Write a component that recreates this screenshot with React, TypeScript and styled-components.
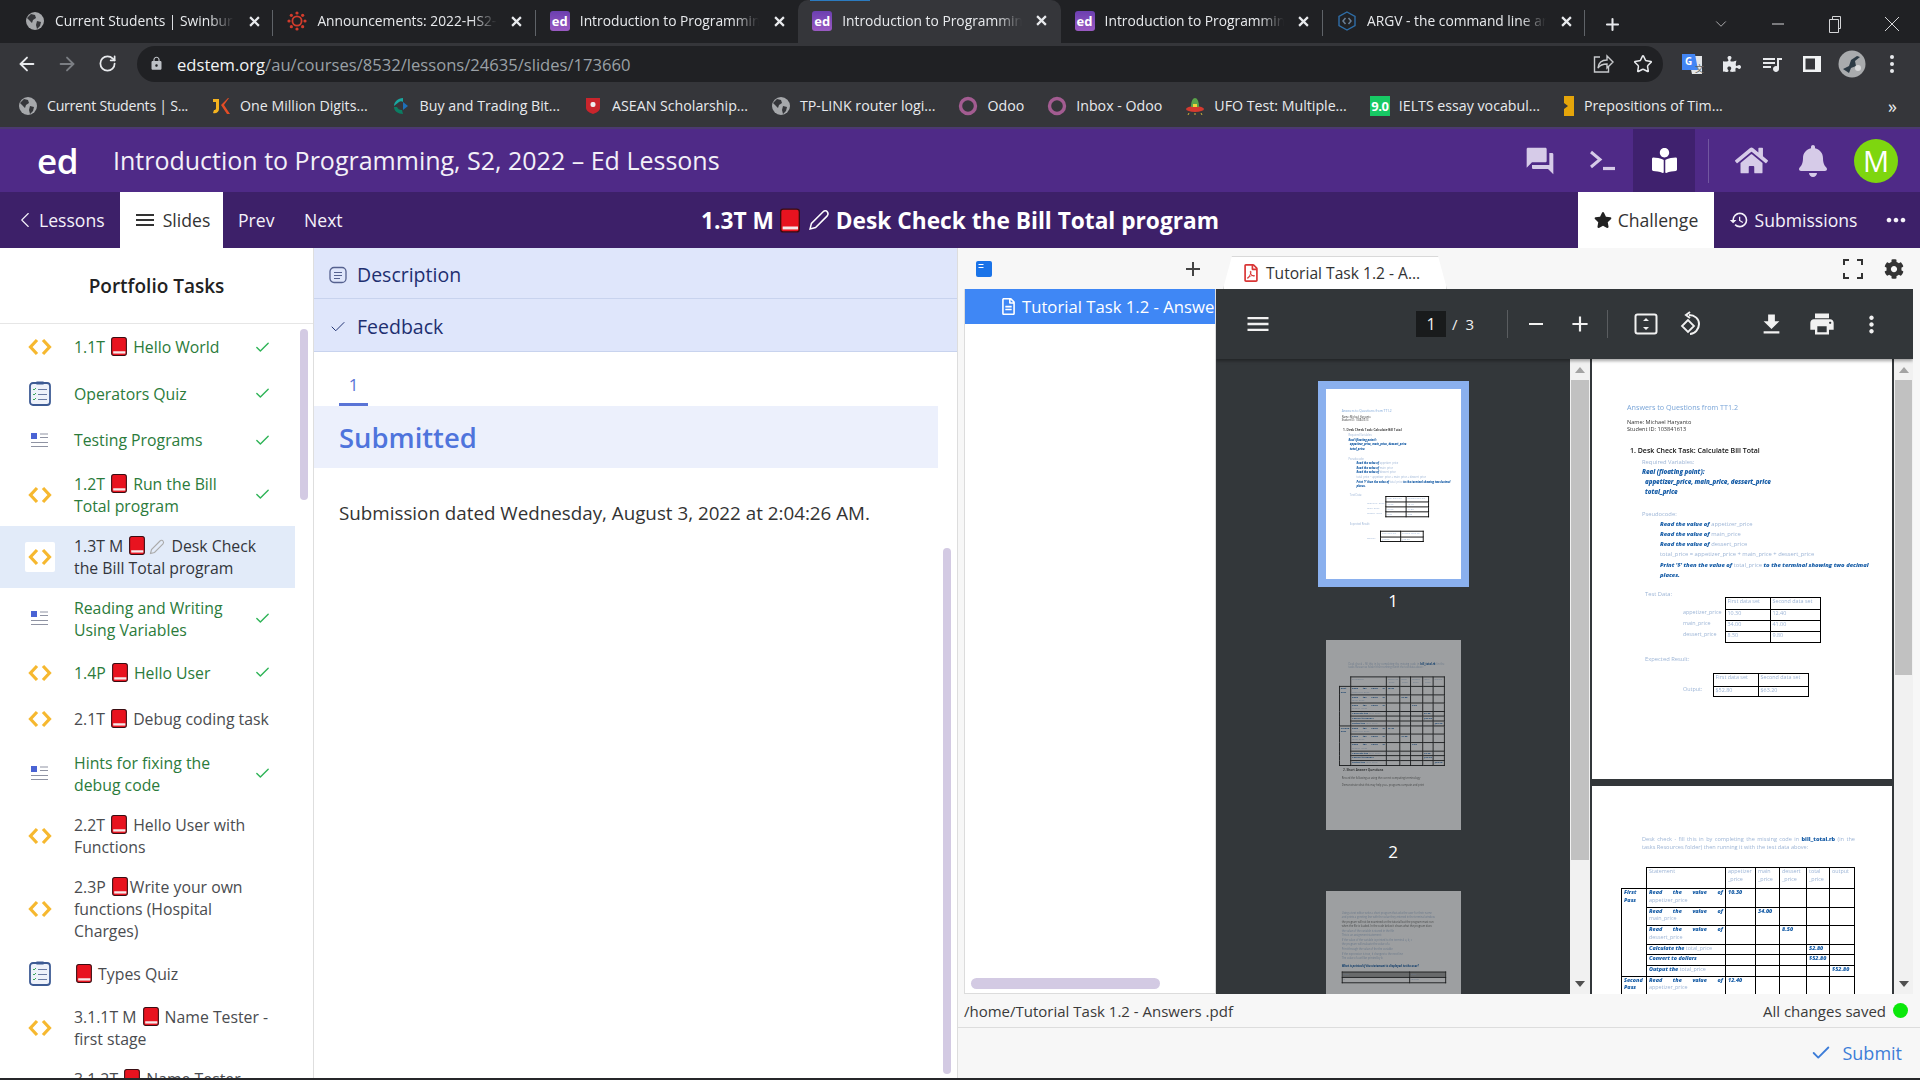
import React from "react";
import styled, { createGlobalStyle } from "styled-components";
import { ArrowLeft, ArrowRight, RotateCw, Star, Check, ChevronLeft, ChevronDown, Plus } from "lucide-react";
import { FaBookReader, FaBell, FaHome, FaStar, FaPuzzlePiece, FaCog, FaRegFilePdf, FaRegFileAlt } from "react-icons/fa";
import { MdQuestionAnswer, MdQueueMusic, MdHistory, MdMoreHoriz, MdMenu, MdRemove, MdAdd, MdFileDownload, MdPrint, MdMoreVert, MdLock } from "react-icons/md";

const Global = createGlobalStyle`
  html, body { margin: 0; padding: 0; height: 100%; overflow: hidden; background: #fff; }
  body { font-family: "Open Sans", "Noto Sans", sans-serif; }
  #root { height: 100%; }
  * { box-sizing: border-box; }
`;

/* === page frame === */
const Page = styled.div`
  width: 1920px;
  height: 1080px;
  display: flex;
  flex-direction: column;
  overflow: hidden;
`;

/* === browser tabs === */
const TabStrip = styled.div`
  height: 43px;
  flex: none;
  background: #202124;
  display: flex;
  align-items: flex-end;
  padding-left: 11px;
  color: #e8eaed;
`;

const Tab = styled.div<{ $active?: boolean; $sep?: boolean }>`
  position: relative;
  width: 262.4px;
  height: ${({ $active }) => ($active ? 43 : 42)}px;
  flex: none;
  display: flex;
  align-items: center;
  gap: 10px;
  padding: 0 9px 2px 14px;
  background: ${({ $active }) => ($active ? "#35363a" : "transparent")};
  border-radius: 10px 10px 0 0;
  &::after {
    content: "";
    display: ${({ $sep }) => ($sep ? "block" : "none")};
    position: absolute;
    right: 0;
    top: 9px;
    height: 26px;
    width: 1px;
    background: #5f6368;
  }
`;

const TabLoad = styled.div`
  position: absolute;
  left: 12px;
  top: 0;
  width: 60px;
  height: 1px;
  background: #2b7bc0;
`;

const TabTitle = styled.div`
  flex: 1;
  min-width: 0;
  white-space: nowrap;
  overflow: hidden;
  font-size: 13.8px;
  line-height: 20px;
  -webkit-mask-image: linear-gradient(to right, #000 86%, transparent 100%);
  mask-image: linear-gradient(to right, #000 86%, transparent 100%);
`;

const TabClose = styled.div`
  width: 20px;
  height: 20px;
  flex: none;
  display: flex;
  align-items: center;
  justify-content: center;
`;

const EdFav = styled.div`
  width: 20px;
  height: 20px;
  flex: none;
  border-radius: 3px;
  background: linear-gradient(#6b3fb0, #9a5ac2);
  color: #fff;
  font-size: 13px;
  font-weight: 700;
  line-height: 20px;
  text-align: center;
`;

const NewTab = styled.div`
  width: 26px;
  margin-left: 14px;
  height: 38px;
  display: flex;
  align-items: center;
  justify-content: center;
`;

const WindowButtons = styled.div`
  margin-left: auto;
  display: flex;
  align-items: center;
  height: 38px;
`;

const WinBtn = styled.div`
  width: 57px;
  display: flex;
  justify-content: center;
  align-items: center;
  color: #d5d6d8;
`;

/* === browser toolbar === */
const ToolBar = styled.div`
  height: 41px;
  flex: none;
  background: #35363a;
  display: flex;
  align-items: center;
  padding: 0 8px 0 7px;
  color: #e8eaed;
`;

const NavBtn = styled.div<{ $dim?: boolean }>`
  width: 40px;
  height: 36px;
  flex: none;
  display: flex;
  align-items: center;
  justify-content: center;
  color: ${({ $dim }) => ($dim ? "#7b7e83" : "#e8eaed")};
`;

const AddressBar = styled.div`
  flex: 1;
  margin: 0 9px 0 10px;
  height: 36px;
  border-radius: 18px;
  background: #202124;
  display: flex;
  align-items: center;
  padding-left: 10px;
`;

const LockCell = styled.div`
  width: 30px;
  padding-left: 2px;
  display: flex;
  justify-content: flex-start;
  color: #bdc1c6;
`;

const Url = styled.div`
  font-size: 16.6px;
  line-height: 24px;
  padding-top: 2px;
  color: #9aa0a6;
  flex: 1;
  b {
    font-weight: 400;
    color: #f1f3f4;
  }
`;

/* === bookmarks === */
const Bookmarks = styled.div`
  height: 45px;
  flex: none;
  background: #35363a;
  border-bottom: 2px solid #4b3a70;
  display: flex;
  align-items: center;
  padding-left: 18px;
  gap: 23px;
  color: #e8eaed;
  font-size: 14.2px;
`;

const Bookmark = styled.div<{ $tight?: boolean }>`
  display: flex;
  align-items: center;
  gap: 9px;
  white-space: nowrap;
  letter-spacing: ${({ $tight }) => ($tight ? "-0.28px" : "0")};
`;

const MoreMarks = styled.div`
  margin-left: auto;
  margin-right: 23px;
  font-size: 18px;
  line-height: 20px;
`;

const IeltsBadge = styled.div`
  width: 20px;
  height: 20px;
  background: #17c964;
  color: #fff;
  font-size: 13px;
  font-weight: 700;
  line-height: 20px;
  text-align: center;
  letter-spacing: -0.5px;
`;

/* === ed header === */
const EdHeader = styled.div`
  height: 63px;
  flex: none;
  background: #4f2a87;
  display: flex;
  align-items: center;
  color: #f3f0f8;
`;

const EdLogo = styled.div`
  width: 113px;
  padding-left: 37px;
  font-size: 35px;
  font-weight: 600;
  line-height: 50px;
  color: #fff;
  letter-spacing: -0.5px;
`;

const EdTitle = styled.div`
  flex: 1;
  padding-bottom: 2px;
  font-size: 25px;
  line-height: 34px;
`;

const HeadCell = styled.div<{ $active?: boolean; $w?: number }>`
  width: ${({ $w }) => $w ?? 62}px;
  height: 63px;
  display: flex;
  align-items: center;
  justify-content: center;
  color: ${({ $active }) => ($active ? "#fff" : "#d6cbe8")};
  background: ${({ $active }) => ($active ? "#3f216e" : "transparent")};
`;

const HeadDivider = styled.div`
  width: 1px;
  height: 44px;
  margin: 0 12px 0 13px;
  background: #7257a0;
`;

const Avatar = styled.div`
  width: 44px;
  height: 44px;
  margin: 0 22px 0 11px;
  border-radius: 50%;
  background: #7ed60f;
  color: #fff;
  font-size: 29px;
  line-height: 44px;
  text-align: center;
`;

/* === ed sub bar === */
const SubBar = styled.div`
  height: 56px;
  flex: none;
  background: #3d2069;
  display: grid;
  grid-template-columns: 1fr auto 1fr;
  align-items: stretch;
  color: #fff;
  font-size: 17.6px;
`;

const SubLeft = styled.div`
  display: flex;
  align-items: stretch;
`;

const SubRight = styled.div`
  display: flex;
  align-items: stretch;
  justify-content: flex-end;
`;

const SubItem = styled.div<{ $on?: boolean; $w: number; $pad?: number; $gap?: number }>`
  width: ${({ $w }) => $w}px;
  display: flex;
  align-items: center;
  justify-content: ${({ $pad }) => ($pad === undefined ? "center" : "flex-start")};
  padding-left: ${({ $pad }) => $pad ?? 0}px;
  gap: ${({ $gap }) => $gap ?? 6}px;
  background: ${({ $on }) => ($on ? "#fff" : "transparent")};
  color: ${({ $on }) => ($on ? "#333" : "#f5f2fa")};
  white-space: nowrap;
`;

const LessonTitle = styled.div`
  display: flex;
  align-items: center;
  gap: 4px;
  font-size: 22.7px;
  font-weight: 700;
  white-space: nowrap;
`;

/* === main === */
const Main = styled.div`
  flex: 1;
  min-height: 0;
  display: grid;
  grid-template-columns: 314px 643px 1fr;
  grid-template-rows: minmax(0, 1fr);
  background: #fff;
`;

const BottomEdge = styled.div`
  height: 2px;
  flex: none;
  background: #26272a;
`;

const Sidebar = styled.aside`
  position: relative;
  border-right: 1px solid #dedede;
  overflow: hidden;
`;

const SideHead = styled.div`
  height: 76px;
  border-bottom: 1px solid #e6e6e6;
  display: flex;
  align-items: center;
  justify-content: center;
  font-size: 19px;
  font-weight: 600;
  color: #222;
`;

const SideRow = styled.div<{ $on?: boolean; $state: "done" | "todo" | "on" }>`
  width: 295px;
  min-height: 46.5px;
  display: flex;
  align-items: center;
  padding: 9px 0 9px 25px;
  font-size: 15.8px;
  line-height: 22px;
  background: ${({ $on }) => ($on ? "#e2ebf9" : "transparent")};
  color: ${({ $state }) => ($state === "done" ? "#2b7b3b" : $state === "on" ? "#33363c" : "#4a4c50")};
`;

const RowIcon = styled.div<{ $on?: boolean }>`
  width: 30px;
  height: 30px;
  margin: -2px 0;
  flex: none;
  display: flex;
  align-items: center;
  justify-content: center;
  border-radius: 2px;
  background: ${({ $on }) => ($on ? "#fff" : "transparent")};
`;

const RowText = styled.div<{ $check?: boolean }>`
  width: ${({ $check }) => ($check ? 180 : 206)}px;
  margin-left: 19px;
  flex: none;
`;

const RowCheck = styled.div`
  color: #2fb457;
  display: flex;
`;

const InlineIcon = styled.svg`
  display: inline-block;
  vertical-align: -3px;
  margin: 0 2px;
`;

const SideThumb = styled.div`
  position: absolute;
  left: 300px;
  top: 81px;
  width: 8px;
  height: 171px;
  border-radius: 4px;
  background: #d3cae3;
`;

/* === middle column === */
const Middle = styled.section`
  position: relative;
  overflow: hidden;
`;

const Accordion = styled.div<{ $tall?: boolean }>`
  height: ${({ $tall }) => ($tall ? 53 : 51)}px;
  background: #dfe6fb;
  border-bottom: 1px solid #c8d3ee;
  display: flex;
  align-items: center;
  padding: 3px 0 0 15px;
  gap: 10px;
  font-size: 19.5px;
  color: #1e2f70;
`;

const Pager = styled.div`
  height: 54px;
  padding: 0 0 0 25px;
  display: flex;
  align-items: flex-end;
`;

const PagerItem = styled.div`
  width: 29px;
  height: 40px;
  border-bottom: 3px solid #5a74d6;
  color: #5a74d6;
  font-size: 17px;
  line-height: 38px;
  text-align: center;
`;

const Band = styled.div`
  width: 624px;
  height: 62px;
  background: #ecf0fc;
  padding-left: 25px;
  display: flex;
  align-items: center;
  font-size: 27.4px;
  font-weight: 600;
  color: #4f74dc;
`;

const SubmissionText = styled.p`
  margin: 30px 0 0 25px;
  font-size: 18.8px;
  line-height: 30px;
  color: #333;
`;

const MiddleThumb = styled.div`
  position: absolute;
  left: 629px;
  top: 300px;
  bottom: 4px;
  width: 8px;
  border-radius: 4px;
  background: #d3cae3;
`;

/* === right column === */
const Right = styled.section`
  border-left: 1px solid #dddddd;
  background: #f7f7f7;
  display: flex;
  flex-direction: column;
  min-width: 0;
  min-height: 0;
`;

const WorkTop = styled.div`
  height: 41px;
  flex: none;
  display: flex;
  padding-left: 6px;
`;

const TreeTop = styled.div`
  width: 250px;
  flex: none;
  display: flex;
  align-items: center;
  justify-content: space-between;
  padding: 0 9px 0 11px;
  color: #444;
`;

const FileTab = styled.div`
  align-self: flex-end;
  width: 224px;
  height: 33px;
  margin-left: 9px;
  flex: none;
  background: #fff;
  border: 1px solid #d9d9d9;
  border-bottom: none;
  clip-path: polygon(4% 0, 96% 0, 100% 100%, 0 100%);
  border-radius: 2px 2px 0 0;
  display: flex;
  align-items: center;
  gap: 6px;
  padding-left: 18px;
  color: #333;
  font-size: 15.6px;
  white-space: nowrap;
`;

const TopTools = styled.div`
  margin-left: auto;
  display: flex;
  align-items: center;
  gap: 21px;
  padding-right: 16px;
  color: #333;
`;

const Work = styled.div`
  flex: 1;
  min-height: 0;
  display: flex;
  padding: 0 7px 0 6px;
`;

const Tree = styled.div`
  position: relative;
  width: 252px;
  flex: none;
  background: #fff;
  border: 1px solid #dcdcdc;
  border-top: none;
  overflow: hidden;
`;

const TreeRow = styled.div`
  height: 35px;
  background: #3f87f5;
  color: #fff;
  font-size: 16.7px;
  display: flex;
  align-items: center;
  gap: 5px;
  padding-left: 35px;
  white-space: nowrap;
  svg {
    flex: none;
  }
`;

const TreeThumb = styled.div`
  position: absolute;
  left: 6px;
  bottom: 4px;
  width: 189px;
  height: 11px;
  border-radius: 6px;
  background: #d3cae3;
`;

const Viewer = styled.div`
  flex: 1;
  min-width: 0;
  display: flex;
  flex-direction: column;
  background: #33373a;
  overflow: hidden;
`;

const ViewerBar = styled.div`
  height: 70px;
  flex: none;
  background: #323639;
  box-shadow: 0 2px 3px rgba(0, 0, 0, 0.35);
  position: relative;
  z-index: 1;
  display: flex;
  align-items: center;
  color: #f1f1f1;
`;

const BarBtn = styled.div<{ $at?: number }>`
  width: 40px;
  margin-left: ${({ $at }) => $at ?? 0}px;
  flex: none;
  display: flex;
  align-items: center;
  justify-content: center;
`;

const PageBox = styled.div`
  width: 30px;
  height: 26px;
  margin-left: 138px;
  background: #191b1c;
  text-align: center;
  font-size: 16px;
  line-height: 26px;
  flex: none;
`;

const PageCount = styled.div`
  margin-left: 6px;
  width: 30px;
  font-size: 15px;
  word-spacing: 4px;
  flex: none;
`;

const BarDivider = styled.div<{ $at: number }>`
  width: 1px;
  height: 28px;
  margin-left: ${({ $at }) => $at}px;
  background: #5a5d60;
  flex: none;
`;

const ViewerBody = styled.div`
  flex: 1;
  min-height: 0;
  display: flex;
`;

const ThumbColumn = styled.div`
  width: 354px;
  flex: none;
  padding-top: 22px;
  display: flex;
  flex-direction: column;
  align-items: center;
  overflow: hidden;
`;

const ThumbFrame = styled.div<{ $on?: boolean }>`
  width: 151px;
  height: 206px;
  flex: none;
  padding: 8px;
  background: ${({ $on }) => ($on ? "#8ab0ee" : "transparent")};
`;

const ThumbClip = styled.div<{ $on?: boolean }>`
  width: 135px;
  height: 190px;
  overflow: hidden;
  background: #fff;
  opacity: ${({ $on }) => ($on ? 1 : 0.52)};
`;

const ThumbScale = styled.div`
  width: 300px;
  height: 420px;
  transform: scale(0.45);
  transform-origin: top left;
  --rule: 2.2px;
`;

const ThumbLabel = styled.div`
  height: 45px;
  flex: none;
  color: #fff;
  font-size: 17px;
  line-height: 27px;
`;

const ScrollTrack = styled.div<{ $w: number }>`
  width: ${({ $w }) => $w}px;
  flex: none;
  background: #f1f1f1;
  display: flex;
  flex-direction: column;
  align-items: center;
  overflow: hidden;
`;

const ArrowCell = styled.div<{ $down?: boolean }>`
  height: 21px;
  flex: none;
  display: flex;
  align-items: center;
  justify-content: center;
  &::before {
    content: "";
    border-left: 5px solid transparent;
    border-right: 5px solid transparent;
    ${({ $down }) => ($down ? "border-top: 6px solid #505050;" : "border-bottom: 6px solid #a3a3a3;")}
  }
`;

const ScrollThumb = styled.div<{ $h: number }>`
  width: calc(100% - 2px);
  height: ${({ $h }) => $h}px;
  flex: none;
  background: #c1c1c1;
`;

const ScrollFill = styled.div`
  flex: 1;
`;

const PageColumn = styled.div`
  width: 300px;
  flex: none;
  margin: 0 2px;
  display: flex;
  flex-direction: column;
  gap: 7px;
  overflow: hidden;
`;

/* === pdf pages, drawn at view size, the thumbs scale them === */
const Sheet = styled.div`
  width: 300px;
  height: 420px;
  flex: none;
  background: #fff;
  overflow: hidden;
  padding-top: 43px;
  font-family: "Open Sans", sans-serif;
  font-size: 5.8px;
  line-height: 10.2px;
  color: #9db5d6;
  filter: blur(0.3px);
`;

const Line = styled.div<{ $x?: number; $mt?: number; $kind?: string }>`
  margin-left: ${({ $x }) => $x ?? 35}px;
  margin-top: ${({ $mt }) => $mt ?? 0}px;
  white-space: nowrap;
  ${({ $kind }) =>
    $kind === "title"
      ? "font-size:7.2px;color:#7aa5d8;"
      : $kind === "name"
        ? "color:#333;line-height:7px;font-size:5.6px;"
        : $kind === "head"
          ? "color:#111;font-size:7px;font-weight:600;"
          : $kind === "bold"
            ? "color:#1a5fa8;font-weight:800;font-style:italic;font-size:6.2px;letter-spacing:-0.05px;"
            : $kind === "dark"
              ? "color:#555;"
              : ""}
  b {
    color: #1a5fa8;
    font-style: italic;
    font-weight: 800;
  }
`;

const Justified = styled.div`
  margin: 6px 37px 0 50px;
  text-align: justify;
  line-height: 8px;
  font-size: 5.6px;
  b {
    color: #1a5fa8;
    font-weight: 800;
  }
`;

const DocTable = styled.table<{ $x: number; $mt: number }>`
  margin-left: ${({ $x }) => $x}px;
  margin-top: ${({ $mt }) => $mt}px;
  border-collapse: collapse;
  table-layout: fixed;
  font-size: 5.4px;
  line-height: 7.6px;
  td {
    padding: 0 2px;
    overflow: hidden;
    white-space: nowrap;
    vertical-align: top;
  }
  td.g {
    border: var(--rule, 1px) solid #000;
  }
  td.w {
    white-space: normal;
  }
  b {
    color: #1a5fa8;
    font-style: italic;
    font-weight: 800;
  }
  b.j {
    display: block;
    text-align-last: justify;
  }
`;

const Tr = styled.tr<{ $h: number; $shade?: boolean }>`
  height: ${({ $h }) => $h}px;
  background: ${({ $shade }) => ($shade ? "#999" : "transparent")};
`;

/* === status + submit === */
const StatusBar = styled.div`
  height: 34px;
  flex: none;
  border-bottom: 1px solid #dddddd;
  display: flex;
  align-items: center;
  justify-content: space-between;
  padding: 0 12px 0 6px;
  font-size: 15px;
  color: #3a3a3a;
`;

const Saved = styled.div`
  display: flex;
  align-items: center;
  gap: 7px;
`;

const Dot = styled.div`
  width: 15px;
  height: 15px;
  border-radius: 50%;
  background: #0be80b;
`;

const SubmitBar = styled.div`
  height: 50px;
  flex: none;
  display: flex;
  align-items: center;
  justify-content: flex-end;
  gap: 10px;
  padding-right: 18px;
  color: #3d7dd8;
  font-size: 18px;
`;

/* === small drawings === */
const X = ({ size = 11, w = 2 }: { size?: number; w?: number }) => (
  <svg width={size} height={size} viewBox="0 0 10 10" stroke="#e8eaed" strokeWidth={w} fill="none">
    <path d="M1 1l8 8M9 1l-8 8" />
  </svg>
);

const GlobeFav = () => (
  <svg width="20" height="20" viewBox="0 0 20 20">
    <circle cx="10" cy="10" r="9" fill="#a6a8ab" />
    <path d="M6 3l4 1 1 3-3 2-1 3-3-3-2-2zM12 10l4 1-1 4-3 3-1-4z" fill="#35363a" />
  </svg>
);

const CanvasFav = () => (
  <svg width="20" height="20" viewBox="0 0 20 20">
    <circle cx="10" cy="10" r="4.6" fill="none" stroke="#d13c2c" strokeWidth="1.8" />
    {[0, 45, 90, 135, 180, 225, 270, 315].map((a) => (
      <circle key={a} cx={10 + 8 * Math.cos((a * Math.PI) / 180)} cy={10 + 8 * Math.sin((a * Math.PI) / 180)} r="1.6" fill="#d13c2c" />
    ))}
  </svg>
);

const ArgvFav = () => (
  <svg width="20" height="20" viewBox="0 0 20 20" fill="none">
    <path d="M10 1l8 4.500v9L10 19l-8-4.500v-9z" stroke="#2f6ea8" strokeWidth="1.4" />
    <path d="M8.500 7L6 10l2.500 3M11.500 7L14 10l-2.500 3" stroke="#6a7f95" strokeWidth="1.5" />
  </svg>
);

const OdooRing = () => (
  <svg width="20" height="20" viewBox="0 0 20 20">
    <circle cx="10" cy="10" r="7.5" fill="none" stroke="#a35c91" strokeWidth="3.4" />
  </svg>
);

const Book = ({ w = 16, h = 19 }: { w?: number; h?: number }) => (
  <InlineIcon width={w} height={h} viewBox="0 0 15 18">
    <rect x="0.5" y="0.5" width="14" height="17" rx="2" fill="#e8131f" stroke="#3a0d12" />
    <rect x="2" y="13.5" width="11.5" height="2.2" fill="#f5e9e9" />
  </InlineIcon>
);

const Pen = ({ size = 16, color = "#aaa" }: { size?: number; color?: string }) => (
  <InlineIcon width={size} height={size} viewBox="0 0 16 16" fill="none">
    <path d="M1.5 14.5l1-4L11 2c1-1 2.4-.8 3 0s.8 2 0 3L5.5 13.5z" stroke={color} strokeWidth="1.1" />
  </InlineIcon>
);

const CodeIcon = () => (
  <svg width="24" height="18" viewBox="0 0 24 18" fill="none" stroke="#f6b82f" strokeWidth="3.2">
    <path d="M9 2L2.500 9 9 16M15 2l6.500 7L15 16" />
  </svg>
);

const QuizIcon = () => (
  <svg width="22" height="25" viewBox="0 0 22 25" fill="none">
    <rect x="1" y="2" width="20" height="22" rx="3" fill="#eef2fa" stroke="#3d5b94" strokeWidth="1.8" />
    <rect x="7" y="0.5" width="8" height="3" rx="1" fill="#3d5b94" />
    <path d="M4 8l1 1 2-2M4 13l1 1 2-2M4 18l1 1 2-2" stroke="#3aa95a" strokeWidth="1" />
    <path d="M9 8.500h9M9 13.500h9M9 18.500h9" stroke="#6a7ba3" strokeWidth="1.1" />
  </svg>
);

const SlideIcon = () => (
  <svg width="18" height="17" viewBox="0 0 18 17" fill="none">
    <rect x="0" y="1" width="6" height="6" fill="#4a63d4" />
    <path d="M9 2h8M9 5.500h8M0 10.500h17M0 14.500h17" stroke="#8f93a3" strokeWidth="1" />
  </svg>
);

const Sm = ({ children, w, h }: { children: React.ReactNode; w: number; h?: number }) => (
  <svg width={w} height={h ?? w} viewBox={`0 0 ${w} ${h ?? w}`} fill="none">
    {children}
  </svg>
);

/* === data === */
type Row = { icon: "code" | "quiz" | "slide"; state: "done" | "todo" | "on"; label: React.ReactNode };

const rows: Row[] = [
  { icon: "code", state: "done", label: <>1.1T <Book /> Hello World</> },
  { icon: "quiz", state: "done", label: "Operators Quiz" },
  { icon: "slide", state: "done", label: "Testing Programs" },
  { icon: "code", state: "done", label: <>1.2T <Book /> Run the Bill Total program</> },
  { icon: "code", state: "on", label: <>1.3T M <Book /><Pen /> Desk Check the Bill Total program</> },
  { icon: "slide", state: "done", label: "Reading and Writing Using Variables" },
  { icon: "code", state: "done", label: <>1.4P <Book /> Hello User</> },
  { icon: "code", state: "todo", label: <>2.1T <Book /> Debug coding task</> },
  { icon: "slide", state: "done", label: "Hints for fixing the debug code" },
  { icon: "code", state: "todo", label: <>2.2T <Book /> Hello User with Functions</> },
  { icon: "code", state: "todo", label: <>2.3P <Book />Write your own functions (Hospital Charges)</> },
  { icon: "quiz", state: "todo", label: <><Book /> Types Quiz</> },
  { icon: "code", state: "todo", label: <>3.1.1T M <Book /> Name Tester - first stage</> },
  { icon: "code", state: "todo", label: <>3.1.2T <Book /> Name Tester - second stage</> },
];

const tabs = [
  { fav: <GlobeFav />, title: "Current Students | Swinburne", sep: true },
  { fav: <CanvasFav />, title: "Announcements: 2022-HS2-COS", sep: true },
  { fav: <EdFav>ed</EdFav>, title: "Introduction to Programming", sep: false },
  { fav: <EdFav>ed</EdFav>, title: "Introduction to Programming", active: true },
  { fav: <EdFav>ed</EdFav>, title: "Introduction to Programming", sep: true },
  { fav: <ArgvFav />, title: "ARGV - the command line argu", sep: true },
];

const PageOne = () => (
  <Sheet>
    <Line $kind="title">Answers to Questions from TT1.2</Line>
    <Line $kind="name" $mt={7}>Name: Michael Haryanto</Line>
    <Line $kind="name">Student ID: 103841613</Line>
    <Line $kind="head" $x={38} $mt={12.4}>1. Desk Check Task: Calculate Bill Total</Line>
    <Line $x={50} $mt={0.8}>Required Variables:</Line>
    <Line $kind="bold" $x={50}>Real (floating point):</Line>
    <Line $kind="bold" $x={53}>appetizer_price, main_price, dessert_price</Line>
    <Line $kind="bold" $x={53}>total_price</Line>
    <Line $x={50} $mt={11.2}>Pseudocode:</Line>
    <Line $x={68}><b>Read the value of</b> appetizer_price</Line>
    <Line $x={68}><b>Read the value of</b> main_price</Line>
    <Line $x={68}><b>Read the value of</b> dessert_price</Line>
    <Line $x={68}>total_price = appetizer_price + main_price + dessert_price</Line>
    <Line $x={68}><b>Print '$' then the value of</b> total_price <b>to the terminal showing two decimal</b></Line>
    <Line $x={68}><b>places.</b></Line>
    <Line $x={53} $mt={8.7}>Test Data:</Line>
    <DocTable $x={89} $mt={-2}>
      <colgroup><col width={44} /><col width={45} /><col width={50} /></colgroup>
      <tbody>
        <Tr $h={12}><td /><td className="g">First data set</td><td className="g">Second data set</td></Tr>
        <Tr $h={11}><td>appetizer_price</td><td className="g">10.30</td><td className="g">12.40</td></Tr>
        <Tr $h={11}><td>main_price</td><td className="g">34.00</td><td className="g">41.00</td></Tr>
        <Tr $h={11}><td>dessert_price</td><td className="g">8.50</td><td className="g">9.80</td></Tr>
      </tbody>
    </DocTable>
    <Line $x={53} $mt={11.5}>Expected Result:</Line>
    <DocTable $x={89} $mt={8}>
      <colgroup><col width={32} /><col width={45} /><col width={50} /></colgroup>
      <tbody>
        <Tr $h={13}><td /><td className="g">First data set</td><td className="g">Second data set</td></Tr>
        <Tr $h={10}><td>Output:</td><td className="g">$52.80</td><td className="g">$63.20</td></Tr>
      </tbody>
    </DocTable>
  </Sheet>
);

const readRow = (what: string, v: string, col: number, first?: React.ReactNode) => (
  <Tr $h={18.6}>
    {first}
    <td className="g w"><b className="j">Read the value of</b>{what}</td>
    {[0, 1, 2, 3, 4].map((i) => (
      <td className="g" key={i}>{i === col ? <b>{v}</b> : null}</td>
    ))}
  </Tr>
);

const calcRow = (bold: string, rest: string, v: string, col: number) => (
  <Tr $h={10.7}>
    <td className="g"><b>{bold}</b> {rest}</td>
    {[0, 1, 2, 3, 4].map((i) => (
      <td className="g" key={i}>{i === col ? <b>{v}</b> : null}</td>
    ))}
  </Tr>
);

const PageTwo = () => (
  <Sheet>
    <Justified>
      Desk check - fill this in by completing the missing code in <b>bill_total.rb</b> (in the tasks Resources folder) then running it with the test data above:
    </Justified>
    <DocTable $x={29} $mt={16}>
      <colgroup>
        <col width={25} /><col width={79} /><col width={30} /><col width={24} /><col width={27} /><col width={23} /><col width={25} />
      </colgroup>
      <tbody>
        <Tr $h={21}>
          <td />
          <td className="g">Statement</td>
          <td className="g w">appetizer _price</td>
          <td className="g w">main _price</td>
          <td className="g w">dessert _price</td>
          <td className="g w">total _price</td>
          <td className="g">output</td>
        </Tr>
        {readRow("appetizer_price", "10.30", 0, <td className="g w" rowSpan={6}><b>First Pass</b></td>)}
        {readRow("main_price", "34.00", 1)}
        {readRow("dessert_price", "8.50", 2)}
        {calcRow("Calculate the", "total_price", "52.80", 3)}
        {calcRow("Convert to dollars", "", "$52.80", 3)}
        {calcRow("Output the", "total_price", "$52.80", 4)}
        {readRow("appetizer_price", "12.40", 0, <td className="g w" rowSpan={6}><b>Second Pass</b></td>)}
        {readRow("main_price", "41.00", 1)}
        {readRow("dessert_price", "9.80", 2)}
        {calcRow("Calculate the", "total_price", "63.20", 3)}
        {calcRow("Convert to dollars", "", "$63.20", 3)}
        {calcRow("Output the", "total_price", "$63.20", 4)}
      </tbody>
    </DocTable>
    <Line $kind="head" $x={38} $mt={5}>2. Short Answer Questions</Line>
    <Line $kind="dark" $x={35} $mt={6}>Record the following as using the correct computing terminology</Line>
    <Line $kind="dark" $x={35} $mt={6}>Demonstrate what this may help you - programs compute and print</Line>
  </Sheet>
);

const PageThree = () => (
  <Sheet>
    {[
      "Using a text editor write a short program that asks the user for their name",
      "and prints a greeting line with the value they entered in the terminal window",
      "the program will not be examined on the tutorial but the program must run",
      "when the file is loaded. In the code below it shows what the program does",
      "the value of the variable is stored in the file",
      "This is an assignment statement:",
      "If the value of the variable is printed to the terminal a, b, c",
      "the program will evaluate the value of a",
      "Print through the value of the the variable",
      "If the expression is true, it changes to the next line",
      "The value of a will be printed by b",
    ].map((t, i) => (
      <Line key={i} $x={35} $kind={i === 2 || i === 3 ? "dark" : undefined}>{t}</Line>
    ))}
    <Line $kind="bold" $x={35} $mt={6}>What is printed if the statement is displayed to the user?</Line>
    <DocTable $x={35} $mt={8}>
      <colgroup><col width={150} /><col width={80} /></colgroup>
      <tbody>
        <Tr $h={12} $shade><td className="g">Item</td><td className="g">Type</td></Tr>
        <Tr $h={12}><td className="g">a</td><td className="g">Integer</td></Tr>
      </tbody>
    </DocTable>
  </Sheet>
);

export default function App() {
  return (
    <Page>
      <Global />
      <TabStrip>
        {tabs.map((t, i) => (
          <Tab key={i} $active={t.active} $sep={t.sep}>
            {t.active && <TabLoad />}
            {t.fav}
            <TabTitle>{t.title}</TabTitle>
            <TabClose><X /></TabClose>
          </Tab>
        ))}
        <NewTab><Plus size={19} strokeWidth={2.6} color="#e8eaed" /></NewTab>
        <WindowButtons>
          <WinBtn><ChevronDown size={18} strokeWidth={1} /></WinBtn>
          <WinBtn>
            <Sm w={14}><path d="M1 7h12" stroke="currentColor" /></Sm>
          </WinBtn>
          <WinBtn>
            <Sm w={14} h={18}><path d="M1.500 4.500h9v13h-9zM4.500 4.500v-3h8v12h-2" stroke="currentColor" /></Sm>
          </WinBtn>
          <WinBtn><Sm w={16}><path d="M1 1l14 14M15 1L1 15" stroke="currentColor" /></Sm></WinBtn>
        </WindowButtons>
      </TabStrip>

      <ToolBar>
        <NavBtn><ArrowLeft size={22} strokeWidth={2} /></NavBtn>
        <NavBtn $dim><ArrowRight size={22} strokeWidth={2} /></NavBtn>
        <NavBtn><RotateCw size={19} strokeWidth={2.2} /></NavBtn>
        <AddressBar>
          <LockCell><MdLock size={15} /></LockCell>
          <Url><b>edstem.org</b>/au/courses/8532/lessons/24635/slides/173660</Url>
          <NavBtn>
            <Sm w={22}>
              <path d="M8 4H2.500v15h14v-5" stroke="#c8cacd" strokeWidth="1.4" />
              <path d="M6 15c.5-5 4-8 9-8V3l6 6-6 6v-4c-4 0-7 1-9 4z" stroke="#c8cacd" strokeWidth="1.4" />
            </Sm>
          </NavBtn>
          <NavBtn><Star size={20} strokeWidth={1.8} /></NavBtn>
        </AddressBar>
        <NavBtn>
          <Sm w={24}>
            <path d="M8 4h14v18H12z" fill="#e4e6e8" />
            <path d="M2 2h13l3 16H2z" fill="#4285f4" />
            <text x="5" y="13" fontSize="10" fontWeight="700" fontFamily="Open Sans" fill="#fff">G</text>
            <text x="15" y="20" fontSize="9" fontFamily="Noto Sans CJK SC" fill="#666">文</text>
          </Sm>
        </NavBtn>
        <NavBtn><FaPuzzlePiece size={18} /></NavBtn>
        <NavBtn><MdQueueMusic size={24} /></NavBtn>
        <NavBtn>
          <Sm w={20}><path d="M1 2h18v16H1z" fill="#f1f3f4" /><path d="M3.500 4.500h9.500v11H3.500z" fill="#35363a" /></Sm>
        </NavBtn>
        <NavBtn>
          <Sm w={28}>
            <circle cx="14" cy="14" r="13.500" fill="#a9abad" />
            <path d="M5 19l6-3 2-6 6-4 3 1-5 4 1 5-5 2-2 5z" fill="#2c3a44" />
            <circle cx="20" cy="18" r="3" fill="#d8d9da" />
          </Sm>
        </NavBtn>
        <NavBtn>
          <Sm w={6} h={20}><circle cx="3" cy="3" r="2" fill="#e8eaed" /><circle cx="3" cy="10" r="2" fill="#e8eaed" /><circle cx="3" cy="17" r="2" fill="#e8eaed" /></Sm>
        </NavBtn>
      </ToolBar>

      <Bookmarks>
        <Bookmark $tight><GlobeFav />Current Students | S...</Bookmark>
        <Bookmark>
          <Sm w={20}>
            <path d="M2 3h6v10c0 3-3 5-6 4l1-3c1 .3 2-.5 2-1.500V6H2z" fill="#f5b31f" />
            <path d="M10 9l7-7h1l-5 7 6 9h-3z" fill="#e44d26" />
          </Sm>
          One Million Digits...
        </Bookmark>
        <Bookmark>
          <Sm w={20}>
            <path d="M12 2C7 2 3 6 3 10l5-4c1-1 3-1 4 0z" fill="#1aa7a0" />
            <path d="M3 11c0 4 4 7 9 7l-1-4c-3 0-4-1-5-3z" fill="#0c7d63" />
            <path d="M12 6l5 4-5 4z" fill="#1e6fb8" />
          </Sm>
          Buy and Trading Bit...
        </Bookmark>
        <Bookmark>
          <Sm w={20}>
            <path d="M3 2h14v10c0 3-4 5-7 6-3-1-7-3-7-6z" fill="#c9252c" />
            <rect x="7.500" y="6" width="5" height="5" rx="2" fill="#eee" />
          </Sm>
          ASEAN Scholarship...
        </Bookmark>
        <Bookmark><GlobeFav />TP-LINK router logi...</Bookmark>
        <Bookmark><OdooRing />Odoo</Bookmark>
        <Bookmark><OdooRing />Inbox - Odoo</Bookmark>
        <Bookmark>
          <Sm w={20}>
            <ellipse cx="10" cy="13" rx="9" ry="3" fill="#d43a2f" />
            <path d="M6 11c0-6 2-9 4-9s4 3 4 9z" fill="#5aa34a" />
            <path d="M8 8h4v3H8z" fill="#f1d23a" />
            <path d="M4 17l-1 2M10 17v2M16 17l1 2" stroke="#c9b23a" />
          </Sm>
          UFO Test: Multiple...
        </Bookmark>
        <Bookmark><IeltsBadge>9.0</IeltsBadge>IELTS essay vocabul...</Bookmark>
        <Bookmark>
          <Sm w={12} h={20}><path d="M1 0h10v20H1v-7l4-3-4-3z" fill="#e5a50a" /></Sm>
          Prepositions of Tim...
        </Bookmark>
        <MoreMarks>»</MoreMarks>
      </Bookmarks>

      <EdHeader>
        <EdLogo>ed</EdLogo>
        <EdTitle>Introduction to Programming, S2, 2022 – Ed Lessons</EdTitle>
        <HeadCell><MdQuestionAnswer size={32} /></HeadCell>
        <HeadCell>
          <Sm w={28} h={24}><path d="M3 3l9 7.500-9 7.500" stroke="currentColor" strokeWidth="3" /><path d="M15 19.500h12" stroke="currentColor" strokeWidth="3.2" /></Sm>
        </HeadCell>
        <HeadCell $active><FaBookReader size={25} /></HeadCell>
        <HeadDivider />
        <HeadCell $w={61}><FaHome size={33} /></HeadCell>
        <HeadCell $w={61}><FaBell size={32} /></HeadCell>
        <Avatar>M</Avatar>
      </EdHeader>

      <SubBar>
        <SubLeft>
          <SubItem $w={120} $pad={12} $gap={1}>
            <ChevronLeft size={26} strokeWidth={1} />
            Lessons
          </SubItem>
          <SubItem $w={103} $on>
            <MdMenu size={24} color="#333" />
            Slides
          </SubItem>
          <SubItem $w={81} $pad={15}>Prev</SubItem>
          <SubItem $w={54} $pad={0}>Next</SubItem>
        </SubLeft>
        <LessonTitle>
          1.3T M <Book w={20} h={25} /><Pen size={22} color="#fff" /> Desk Check the Bill Total program
        </LessonTitle>
        <SubRight>
          <SubItem $w={136} $on>
            <FaStar size={18} color="#222" />
            Challenge
          </SubItem>
          <SubItem $w={158}>
            <MdHistory size={20} />
            Submissions
          </SubItem>
          <SubItem $w={48}><MdMoreHoriz size={28} /></SubItem>
        </SubRight>
      </SubBar>

      <Main>
        <Sidebar>
          <SideHead>Portfolio Tasks</SideHead>
          {rows.map((r, i) => (
            <SideRow key={i} $state={r.state} $on={r.state === "on"}>
              <RowIcon $on={r.state === "on"}>
                {r.icon === "code" ? <CodeIcon /> : r.icon === "quiz" ? <QuizIcon /> : <SlideIcon />}
              </RowIcon>
              <RowText $check={r.state === "done"}>{r.label}</RowText>
              {r.state === "done" && (
                <RowCheck><Check size={17} strokeWidth={2} /></RowCheck>
              )}
            </SideRow>
          ))}
          <SideThumb />
        </Sidebar>

        <Middle>
          <Accordion>
            <Sm w={18} h={18}>
              <rect x="1" y="1.500" width="16" height="15" rx="4" stroke="#55618f" strokeWidth="1.3" />
              <path d="M5 6.500h8M5 9.500h8M5 12.500h6" stroke="#55618f" strokeWidth="1.1" />
            </Sm>
            Description
          </Accordion>
          <Accordion $tall>
            <Check size={18} strokeWidth={1.3} color="#1e2f70" />
            Feedback
          </Accordion>
          <Pager><PagerItem>1</PagerItem></Pager>
          <Band>Submitted</Band>
          <SubmissionText>Submission dated Wednesday, August 3, 2022 at 2:04:26 AM.</SubmissionText>
          <MiddleThumb />
        </Middle>

        <Right>
          <WorkTop>
            <TreeTop>
              <Sm w={18} h={18}>
                <rect x="1" y="1" width="16" height="16" rx="2" fill="#1a73e8" />
                <path d="M3.500 4.500h5M3.500 7.500h5" stroke="#fff" strokeWidth="1.2" />
              </Sm>
              <MdAdd size={24} />
            </TreeTop>
            <FileTab>
              <FaRegFilePdf size={18} color="#d93636" />
              Tutorial Task 1.2 - A...
            </FileTab>
            <TopTools>
              <Sm w={20}>
                <path d="M1 6V1h5M14 1h5v5M19 14v5h-5M6 19H1v-5" stroke="#333" strokeWidth="2" />
              </Sm>
              <FaCog size={20} />
            </TopTools>
          </WorkTop>

          <Work>
            <Tree>
              <TreeRow>
                <FaRegFileAlt size={17} />
                Tutorial Task 1.2 - Answers .pdf
              </TreeRow>
              <TreeThumb />
            </Tree>
            <Viewer>
              <ViewerBar>
                <BarBtn $at={22}><MdMenu size={28} /></BarBtn>
                <PageBox>1</PageBox>
                <PageCount>/ 3</PageCount>
                <BarDivider $at={25} />
                <BarBtn $at={8}><MdRemove size={24} /></BarBtn>
                <BarBtn $at={4}><MdAdd size={26} /></BarBtn>
                <BarDivider $at={7} />
                <BarBtn $at={18}>
                  <Sm w={24} h={22}>
                    <rect x="1.500" y="1.500" width="21" height="19" rx="2" stroke="#f1f1f1" strokeWidth="2" />
                    <path d="M12 5l3 3H9zM12 17l3-3H9z" fill="#f1f1f1" />
                  </Sm>
                </BarBtn>
                <BarBtn $at={5}>
                  <Sm w={22} h={26}>
                    <path d="M10 1l-4 3 4 3" stroke="#f1f1f1" strokeWidth="2" />
                    <path d="M9 4c6 0 10 4 10 9s-4 10-9 10" stroke="#f1f1f1" strokeWidth="2" />
                    <path d="M8 9l-6 6 6 6 6-6z" stroke="#f1f1f1" strokeWidth="1.800" />
                  </Sm>
                </BarBtn>
                <BarBtn $at={40}><MdFileDownload size={27} /></BarBtn>
                <BarBtn $at={11}><MdPrint size={28} /></BarBtn>
                <BarBtn $at={9}><MdMoreVert size={27} /></BarBtn>
              </ViewerBar>
              <ViewerBody>
                <ThumbColumn>
                  <ThumbFrame $on>
                    <ThumbClip $on><ThumbScale><PageOne /></ThumbScale></ThumbClip>
                  </ThumbFrame>
                  <ThumbLabel>1</ThumbLabel>
                  <ThumbFrame>
                    <ThumbClip><ThumbScale><PageTwo /></ThumbScale></ThumbClip>
                  </ThumbFrame>
                  <ThumbLabel>2</ThumbLabel>
                  <ThumbFrame>
                    <ThumbClip><ThumbScale><PageThree /></ThumbScale></ThumbClip>
                  </ThumbFrame>
                </ThumbColumn>
                <ScrollTrack $w={20}>
                  <ArrowCell />
                  <ScrollThumb $h={480} />
                  <ScrollFill />
                  <ArrowCell $down />
                </ScrollTrack>
                <PageColumn>
                  <PageOne />
                  <PageTwo />
                </PageColumn>
                <ScrollTrack $w={19}>
                  <ArrowCell />
                  <ScrollThumb $h={295} />
                  <ScrollFill />
                  <ArrowCell $down />
                </ScrollTrack>
              </ViewerBody>
            </Viewer>
          </Work>

          <StatusBar>
            <span>/home/Tutorial Task 1.2 - Answers .pdf</span>
            <Saved>All changes saved<Dot /></Saved>
          </StatusBar>
          <SubmitBar>
            <Check size={22} strokeWidth={2} />
            Submit
          </SubmitBar>
        </Right>
      </Main>
      <BottomEdge />
    </Page>
  );
}
